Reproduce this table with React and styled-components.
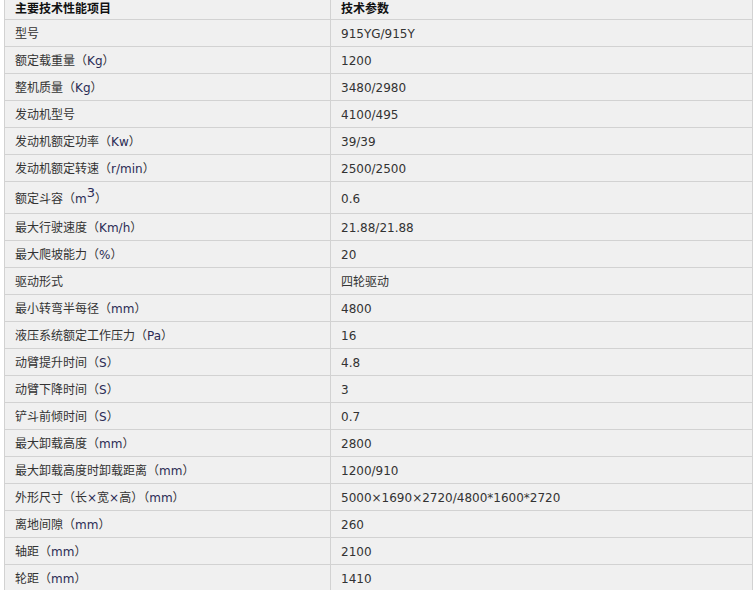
import React from 'react';
import styled, { createGlobalStyle } from 'styled-components';

const GlobalStyle = createGlobalStyle`
  html, body {
    margin: 0;
    padding: 0;
    background: #ffffff;
  }
  body {
    font-family: "DejaVu Sans", Verdana, "Noto Sans CJK SC", sans-serif;
    font-size: 12px;
    color: #333333;
  }
`;

const Page = styled.div`
  padding: 0 3px 0 4px;
  overflow: hidden;
  height: 590px;
`;

const Table = styled.table`
  width: 749px;
  border-collapse: collapse;
  background: #f0f0f0;
  table-layout: fixed;
`;

const Cell = styled.td`
  border: 1px solid #d2d2d2;
  border-top: ${(p) => (p.$head ? 'none' : '1px solid #d2d2d2')};
  height: ${(p) => (p.$head ? '16px' : p.$tall ? '29px' : '25px')};
  padding: ${(p) => (p.$head ? '0 0 3px 10px' : p.$tall ? '2px 0 0 10px' : '1px 0 0 10px')};
  line-height: 14px;
  vertical-align: middle;
  font-weight: ${(p) => (p.$head ? 'bold' : 'normal')};
  color: ${(p) => (p.$head ? '#111111' : '#333333')};
  white-space: nowrap;
`;

const Zh = styled.span`
  font-family: "Noto Sans CJK SC", sans-serif;
`;

const Unit = styled.span`
  color: #2b2b55;
`;

const Sup = styled.sup`
  font-size: 13px;
  line-height: 0;
  vertical-align: 6px;
`;

const rows = [
  ['型号', null, '915YG/915Y'],
  ['额定载重量', 'Kg', '1200'],
  ['整机质量', 'Kg', '3480/2980'],
  ['发动机型号', null, '4100/495'],
  ['发动机额定功率', 'Kw', '39/39'],
  ['发动机额定转速', 'r/min', '2500/2500'],
  ['额定斗容', 'm3', '0.6'],
  ['最大行驶速度', 'Km/h', '21.88/21.88'],
  ['最大爬坡能力', '%', '20'],
  ['驱动形式', null, '四轮驱动'],
  ['最小转弯半每径', 'mm', '4800'],
  ['液压系统额定工作压力', 'Pa', '16'],
  ['动臂提升时间', 'S', '4.8'],
  ['动臂下降时间', 'S', '3'],
  ['铲斗前倾时间', 'S', '0.7'],
  ['最大卸载高度', 'mm', '2800'],
  ['最大卸载高度时卸载距离', 'mm', '1200/910'],
  ['外形尺寸（长×宽×高）', 'mm', '5000×1690×2720/4800*1600*2720'],
  ['离地间隙', 'mm', '260'],
  ['轴距', 'mm', '2100'],
  ['轮距', 'mm', '1410'],
];

function Label({ name, unit }) {
  const parts = name.split(/(×)/);
  return (
    <>
      {parts.map((p, i) =>
        p === '×' ? <Unit key={i}>×</Unit> : <Zh key={i}>{p}</Zh>
      )}
      {unit && (
        <>
          <Zh>（</Zh>
          {unit === 'm3' ? (
            <Unit>
              m<Sup>3</Sup>
            </Unit>
          ) : (
            <Unit>{unit}</Unit>
          )}
          <Zh>）</Zh>
        </>
      )}
    </>
  );
}

export default function App() {
  return (
    <Page>
      <GlobalStyle />
      <Table>
        <colgroup>
          <col style={{ width: '326px' }} />
          <col />
        </colgroup>
        <tbody>
          <tr>
            <Cell $head>
              <Zh>主要技术性能项目</Zh>
            </Cell>
            <Cell $head>
              <Zh>技术参数</Zh>
            </Cell>
          </tr>
          {rows.map(([name, unit, value]) => (
            <tr key={name}>
              <Cell $tall={unit === 'm3'}>
                <Label name={name} unit={unit} />
              </Cell>
              <Cell $tall={unit === 'm3'}>
                {/[\u4e00-\u9fff]/.test(value) ? <Zh>{value}</Zh> : value}
              </Cell>
            </tr>
          ))}
        </tbody>
      </Table>
    </Page>
  );
}
